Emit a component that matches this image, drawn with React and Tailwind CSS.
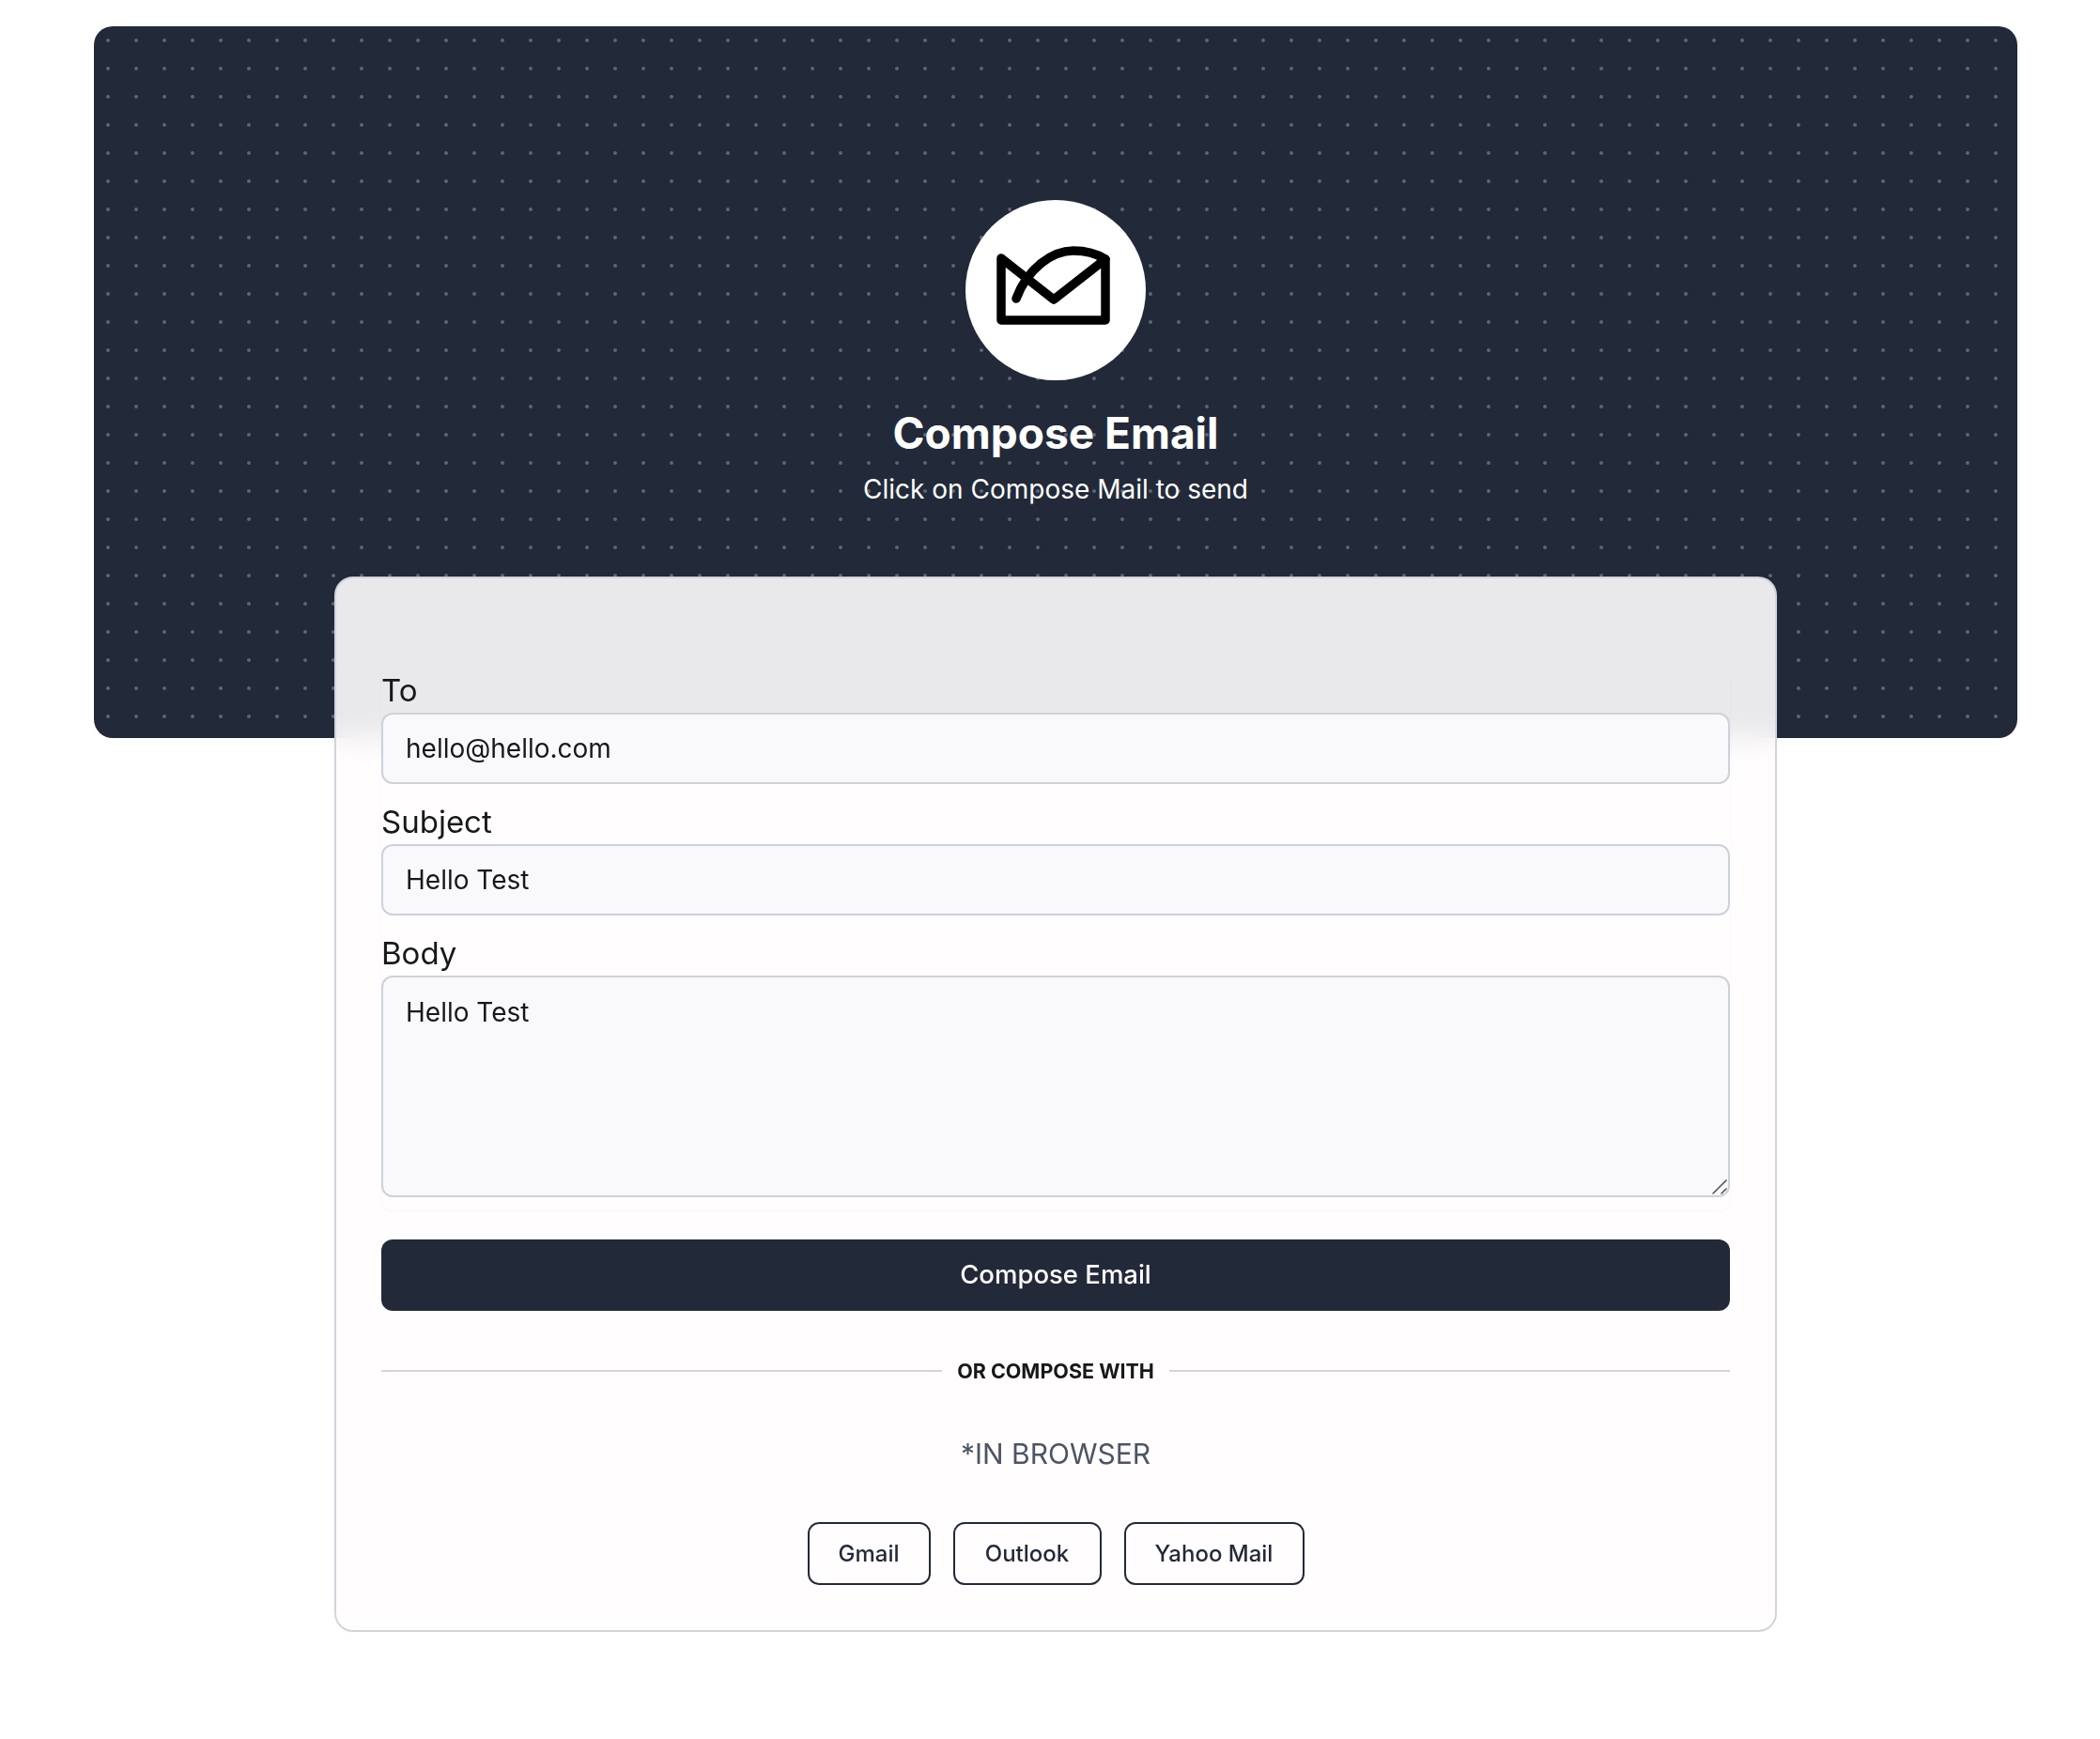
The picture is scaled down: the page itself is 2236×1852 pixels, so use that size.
export default function App() {
  const fieldClass =
    "block w-full rounded-xl border-2 border-[#cdd1dc] bg-[#f9f8fa] px-6 text-[28px] text-[#18181b] outline-none";

  return (
    <div className="min-h-[1852px] bg-white pt-7 pl-[100px] pr-[88px] font-['Inter','Liberation_Sans',sans-serif] text-[#18181b]">
      {/* Header */}
      <div className="flex h-[758px] flex-col items-center rounded-[20px] bg-[#222a3a] bg-[radial-gradient(circle,#5f6574_1.4px,transparent_2.4px)] bg-[length:30px_30px] pt-[185px]">
        <div className="flex h-48 w-48 items-center justify-center rounded-full bg-white">
          <svg width="130" height="100" viewBox="99 69 130 100" fill="none" stroke="#000" strokeWidth="9.5" strokeLinecap="round" strokeLinejoin="round">
            <path d="M106 85V151H217V86L162 129L106 85Z" />
            <path d="M122 128C134 96 160 77 183 77C197 77 209 81 217 86" />
          </svg>
        </div>
        <h1 className="mt-[28px] text-[46px] leading-[56px] font-bold text-white">Compose Email</h1>
        <p className="mt-[10px] text-[28px] leading-[44px] text-white">Click on Compose Mail to send</p>
      </div>

      {/* Form card */}
      <div className="relative mx-auto -mt-[172px] w-[1536px] rounded-[20px] border-2 border-[#d1d5db] bg-[#fffdfe]/90 p-12 backdrop-blur-lg">
        <form className="mt-[47px]">
          <div className="rounded-xl pb-[14px] shadow-[0_1px_3px_rgba(0,0,0,0.04)]">
            <label className="block text-[33px] leading-[48px]">To</label>
            <input className={`${fieldClass} h-[76px]`} defaultValue="hello@hello.com" />
            <label className="mt-4 block text-[33px] leading-[48px]">Subject</label>
            <input className={`${fieldClass} h-[76px]`} defaultValue="Hello Test" />
            <label className="mt-4 block text-[33px] leading-[48px]">Body</label>
            <div className="relative">
              <textarea className={`${fieldClass} h-[236px] resize-none py-[18px] leading-[38px]`} defaultValue="Hello Test" />
              {/* resize grip */}
              <svg className="absolute right-[3px] bottom-[3px]" width="17" height="17" viewBox="0 0 17 17" stroke="#555" strokeWidth="1.6" strokeLinecap="round">
                <path d="M2 16L16 2M11 16L16 11" />
              </svg>
            </div>
          </div>
          <button type="button" className="mt-[31px] h-[76px] w-full rounded-xl bg-[#222a3a] text-[27.5px] font-medium text-white">
            Compose Email
          </button>
        </form>

        <div className="mt-[52px] flex items-center gap-4">
          <div className="h-0.5 flex-1 bg-[#d1d5db]" />
          <span className="text-[21.5px] leading-6 font-bold text-[#18181b]">OR COMPOSE WITH</span>
          <div className="h-0.5 flex-1 bg-[#d1d5db]" />
        </div>

        <p className="mt-[58px] text-center text-[30px] leading-9 text-[#4b5563]">*IN BROWSER</p>

        <div className="mt-[55px] flex justify-center gap-6">
          <button type="button" className="h-[67px] w-[131px] rounded-xl border-2 border-[#222a3a] text-[24px] font-medium text-[#222a3a]">Gmail</button>
          <button type="button" className="h-[67px] w-[158px] rounded-xl border-2 border-[#222a3a] text-[24px] font-medium text-[#222a3a]">Outlook</button>
          <button type="button" className="h-[67px] w-[192px] rounded-xl border-2 border-[#222a3a] text-[24px] font-medium text-[#222a3a]">Yahoo Mail</button>
        </div>
      </div>
    </div>
  );
}
